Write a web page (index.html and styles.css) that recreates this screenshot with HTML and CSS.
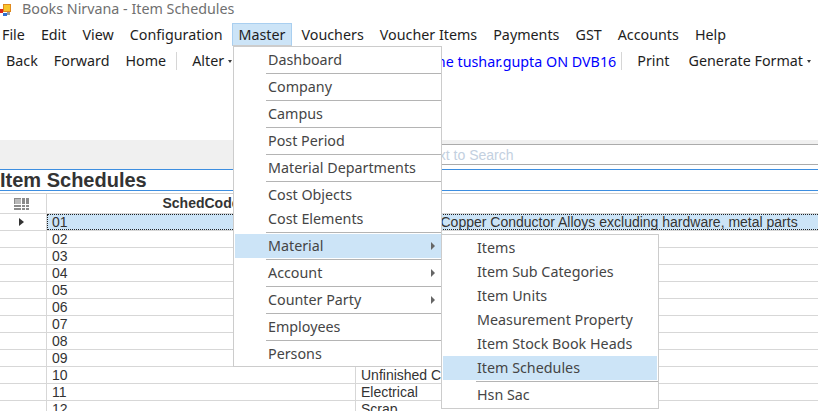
FILE: index.html
```html
<!DOCTYPE html>
<html lang="en">
<head>
<meta charset="utf-8">
<title>Books Nirvana - Item Schedules</title>
<link rel="stylesheet" href="styles.css">
</head>
<body>
<div class="app">
  <header class="titlebar">
    <svg class="app-icon" width="12" height="14" viewBox="0 0 12 14" aria-hidden="true">
      <rect x="3.5" y="0.5" width="7" height="7" fill="#f7c52b" stroke="#e08a1e"/>
      <rect x="0" y="5" width="3" height="4" fill="#d9261c"/>
      <rect x="3" y="9" width="4" height="3" fill="#2f6fd0"/>
      <rect x="7" y="8" width="3" height="3" fill="#9a9a9a"/>
    </svg>
    <span class="title">Books Nirvana - Item Schedules</span>
  </header>

  <nav class="menubar">
    <span class="mb-item">File</span>
    <span class="mb-item">Edit</span>
    <span class="mb-item">View</span>
    <span class="mb-item">Configuration</span>
    <span class="mb-item is-open">Master</span>
    <span class="mb-item">Vouchers</span>
    <span class="mb-item">Voucher Items</span>
    <span class="mb-item">Payments</span>
    <span class="mb-item">GST</span>
    <span class="mb-item">Accounts</span>
    <span class="mb-item">Help</span>
  </nav>

  <div class="toolbar">
    <span class="tb-item">Back</span>
    <span class="tb-item">Forward</span>
    <span class="tb-item">Home</span>
    <span class="tb-sep"></span>
    <span class="tb-item has-drop">Alter<i class="drop"></i></span>
    <span class="tb-label">Welcome tushar.gupta ON DVB16</span>
    <span class="tb-sep"></span>
    <span class="tb-item">Print</span>
    <span class="tb-item has-drop wide">Generate Format<i class="drop"></i></span>
  </div>

  <div class="blank"></div>

  <div class="searchbar">
    <div class="search-box"><input class="search-input" type="text" placeholder="Text to Search"></div>
  </div>

  <h1 class="section-title">Item Schedules</h1>

  <div class="grid">
    <div class="cell head corner">
      <svg width="15" height="12" viewBox="0 0 15 12" aria-hidden="true">
        <rect x="0" y="0" width="15" height="12" fill="#8a8a8a"/>
        <rect x="1" y="1" width="6" height="5" fill="#b9b9b9"/>
        <path d="M7.5 0V12M11.5 0V12M0 6.5H15M0 9.5H15" stroke="#fff" stroke-width="1"/>
      </svg>
    </div>
    <div class="cell head">SchedCode</div>
    <div class="cell head"></div>

    <div class="cell rowhead"><i class="cur"></i></div>
    <div class="cell sel"><span class="sel-inner sel-first">01</span></div>
    <div class="cell sel sel-last"><span class="sel-inner">Cable - Bare Copper Conductor Alloys excluding hardware, metal parts</span></div>

    <div class="cell rowhead"></div><div class="cell">02</div><div class="cell">Raw Material</div>
    <div class="cell rowhead"></div><div class="cell">03</div><div class="cell">Packing Material</div>
    <div class="cell rowhead"></div><div class="cell">04</div><div class="cell">Consumables</div>
    <div class="cell rowhead"></div><div class="cell">05</div><div class="cell">Finished Goods</div>
    <div class="cell rowhead"></div><div class="cell">06</div><div class="cell">Stores &amp; Spares</div>
    <div class="cell rowhead"></div><div class="cell">07</div><div class="cell">Capital Goods</div>
    <div class="cell rowhead"></div><div class="cell">08</div><div class="cell">Tools</div>
    <div class="cell rowhead"></div><div class="cell">09</div><div class="cell">Semi Finished Goods</div>
    <div class="cell rowhead"></div><div class="cell">10</div><div class="cell">Unfinished Components</div>
    <div class="cell rowhead"></div><div class="cell">11</div><div class="cell">Electrical</div>
    <div class="cell rowhead"></div><div class="cell">12</div><div class="cell">Scrap</div>
    <div class="cell rowhead"></div><div class="cell">13</div><div class="cell">Others</div>
  </div>

  <div class="menu master-menu">
    <div class="menu-item">Dashboard</div>
    <div class="menu-sep"></div>
    <div class="menu-item">Company</div>
    <div class="menu-sep"></div>
    <div class="menu-item">Campus</div>
    <div class="menu-sep"></div>
    <div class="menu-item">Post Period</div>
    <div class="menu-sep"></div>
    <div class="menu-item">Material Departments</div>
    <div class="menu-sep"></div>
    <div class="menu-item">Cost Objects</div>
    <div class="menu-item">Cost Elements</div>
    <div class="menu-sep"></div>
    <div class="menu-item is-active">Material<i class="sub-arrow"></i></div>
    <div class="menu-sep"></div>
    <div class="menu-item">Account<i class="sub-arrow"></i></div>
    <div class="menu-sep"></div>
    <div class="menu-item">Counter Party<i class="sub-arrow"></i></div>
    <div class="menu-sep"></div>
    <div class="menu-item">Employees</div>
    <div class="menu-sep"></div>
    <div class="menu-item">Persons</div>
  </div>

  <div class="menu sub-menu">
    <div class="menu-item">Items</div>
    <div class="menu-item">Item Sub Categories</div>
    <div class="menu-item">Item Units</div>
    <div class="menu-item">Measurement Property</div>
    <div class="menu-item">Item Stock Book Heads</div>
    <div class="menu-item is-active">Item Schedules</div>
    <div class="menu-sep"></div>
    <div class="menu-item">Hsn Sac</div>
  </div>
</div>
</body>
</html>
```

FILE: styles.css
```css
* { box-sizing: border-box; }

html, body {
  margin: 0;
  padding: 0;
  width: 818px;
  height: 411px;
  overflow: hidden;
  background: #ffffff;
}

body {
  font-family: "Noto Sans", "Open Sans", sans-serif;
  font-size: 14.3px;
  color: #1e1e1e;
}

.app {
  position: relative;
  width: 818px;
  height: 411px;
  overflow: hidden;
}

/* title bar */
.titlebar {
  height: 23px;
  display: flex;
  align-items: center;
  padding-bottom: 5px;
}
.app-icon { flex: none; margin-top: 4px; }
.title {
  margin-left: 10px;
  font-size: 14.3px;
  color: #707070;
  line-height: 18px;
}

/* menu bar */
.menubar {
  height: 24px;
  display: flex;
  gap: 2px;
  padding-left: 2px;
}
.mb-item {
  height: 23px;
  line-height: 21px;
  padding: 0 6px;
  border: 1px solid transparent;
  white-space: nowrap;
}
.mb-item:first-child { padding-left: 0; border-left: 0; }
.mb-item.is-open {
  background: #cce4f7;
  border-color: #a9cff0;
  border-bottom-color: #cccccc;
}

/* toolbar */
.toolbar {
  height: 28px;
  display: flex;
  align-items: center;
  gap: 4px;
  padding-right: 1px;
}
.tb-item {
  padding: 0 6px;
  white-space: nowrap;
  line-height: 20px;
}
.tb-item.has-drop { display: flex; align-items: center; }
.tb-item.wide { margin-left: 3px; }
.drop {
  display: inline-block;
  margin-left: 4px;
  border-left: 2.5px solid transparent;
  border-right: 2.5px solid transparent;
  border-top: 3px solid #3a3a3a;
}
.tb-sep {
  width: 1px;
  height: 18px;
  background: #d6d6d6;
  margin-right: 5px;
}
.tb-label {
  margin-left: auto;
  padding: 0 1px 0 6px;
  color: #0000ff;
  white-space: nowrap;
}

.blank { height: 65px; }

/* search */
.searchbar {
  height: 29px;
  background: #f0f0f0;
  padding-top: 4px;
}
.search-box {
  margin-left: 420px;
  height: 25px;
  background: #ffffff;
}
.search-input {
  display: block;
  width: 100%;
  height: 21px;
  margin: 0;
  border: 0;
  border-top: 1px solid #ababab;
  border-bottom: 1px solid #ababab;
  padding: 0 4px;
  font-family: "Liberation Sans", Arial, sans-serif;
  font-size: 14px;
  outline: none;
  background: #ffffff;
}
.search-input::placeholder { color: #c3d0e0; }

/* section title */
.section-title {
  margin: 0 0 2px;
  height: 22px;
  border-top: 1px solid #3d8ee0;
  border-bottom: 1px solid #3d8ee0;
  font-family: "Liberation Sans", Arial, sans-serif;
  font-size: 20px;
  font-weight: bold;
  line-height: 20px;
  color: #333333;
  white-space: nowrap;
}

/* data grid */
.grid {
  display: grid;
  grid-template-columns: 47px 309px 1100px;
  grid-template-rows: 21px;
  grid-auto-rows: 17px;
  font-family: "Liberation Sans", Arial, sans-serif;
  font-size: 14px;
  color: #333333;
}
.cell {
  border-right: 1px solid #d7d7d7;
  border-bottom: 1px solid #d7d7d7;
  padding-left: 5px;
  line-height: 17px;
  white-space: nowrap;
  overflow: hidden;
}
.cell.head {
  border-top: 1px solid #cfcfcf;
  font-weight: bold;
  text-align: center;
  line-height: 19px;
  padding-left: 0;
}
.cell.corner {
  display: flex;
  align-items: center;
  justify-content: center;
}
.cell.corner svg { margin-left: -3px; }
.cell.rowhead {
  display: flex;
  align-items: center;
  padding-left: 19px;
}
.cur {
  display: block;
  border-top: 4.5px solid transparent;
  border-bottom: 4.5px solid transparent;
  border-left: 5px solid #333333;
}
.cell.sel {
  padding-left: 0;
}
.cell.sel-last { border-right: 0; }
.sel-inner {
  display: block;
  height: 16px;
  background: #cce4f7;
  border-top: 1px dotted #222222;
  border-bottom: 1px dotted #222222;
  line-height: 14px;
  padding-left: 2px;
}
.sel-inner.sel-first { border-left: 1px dotted #222222; padding-left: 4px; }

/* dropdown menus */
.menu {
  position: absolute;
  background: #ffffff;
  border: 1px solid #cccccc;
  color: #454545;
  font-size: 14.3px;
}
.master-menu {
  left: 233px;
  top: 46px;
  width: 209px;
  padding: 1px 0 0;
}
.sub-menu {
  left: 441px;
  top: 234px;
  width: 218px;
  padding: 1px 0 1px;
}
.menu-item {
  height: 24px;
  line-height: 24px;
  margin-left: 1px;
  padding-left: 33px;
  padding-right: 6px;
  display: flex;
  align-items: center;
  justify-content: space-between;
  white-space: nowrap;
}
.sub-menu .menu-item { padding-left: 34px; margin-right: 1px; }
.menu-item.is-active { background: #cce4f7; }
.sub-arrow {
  display: block;
  border-top: 4px solid transparent;
  border-bottom: 4px solid transparent;
  border-left: 4px solid #666666;
}
.menu-sep {
  height: 3px;
  margin-left: 32px;
  border-top: 1px solid transparent;
}
.menu-sep::before {
  content: "";
  display: block;
  height: 1px;
  background: #b4b4b4;
}
.sub-menu .menu-sep { margin-left: 34px; }
```
